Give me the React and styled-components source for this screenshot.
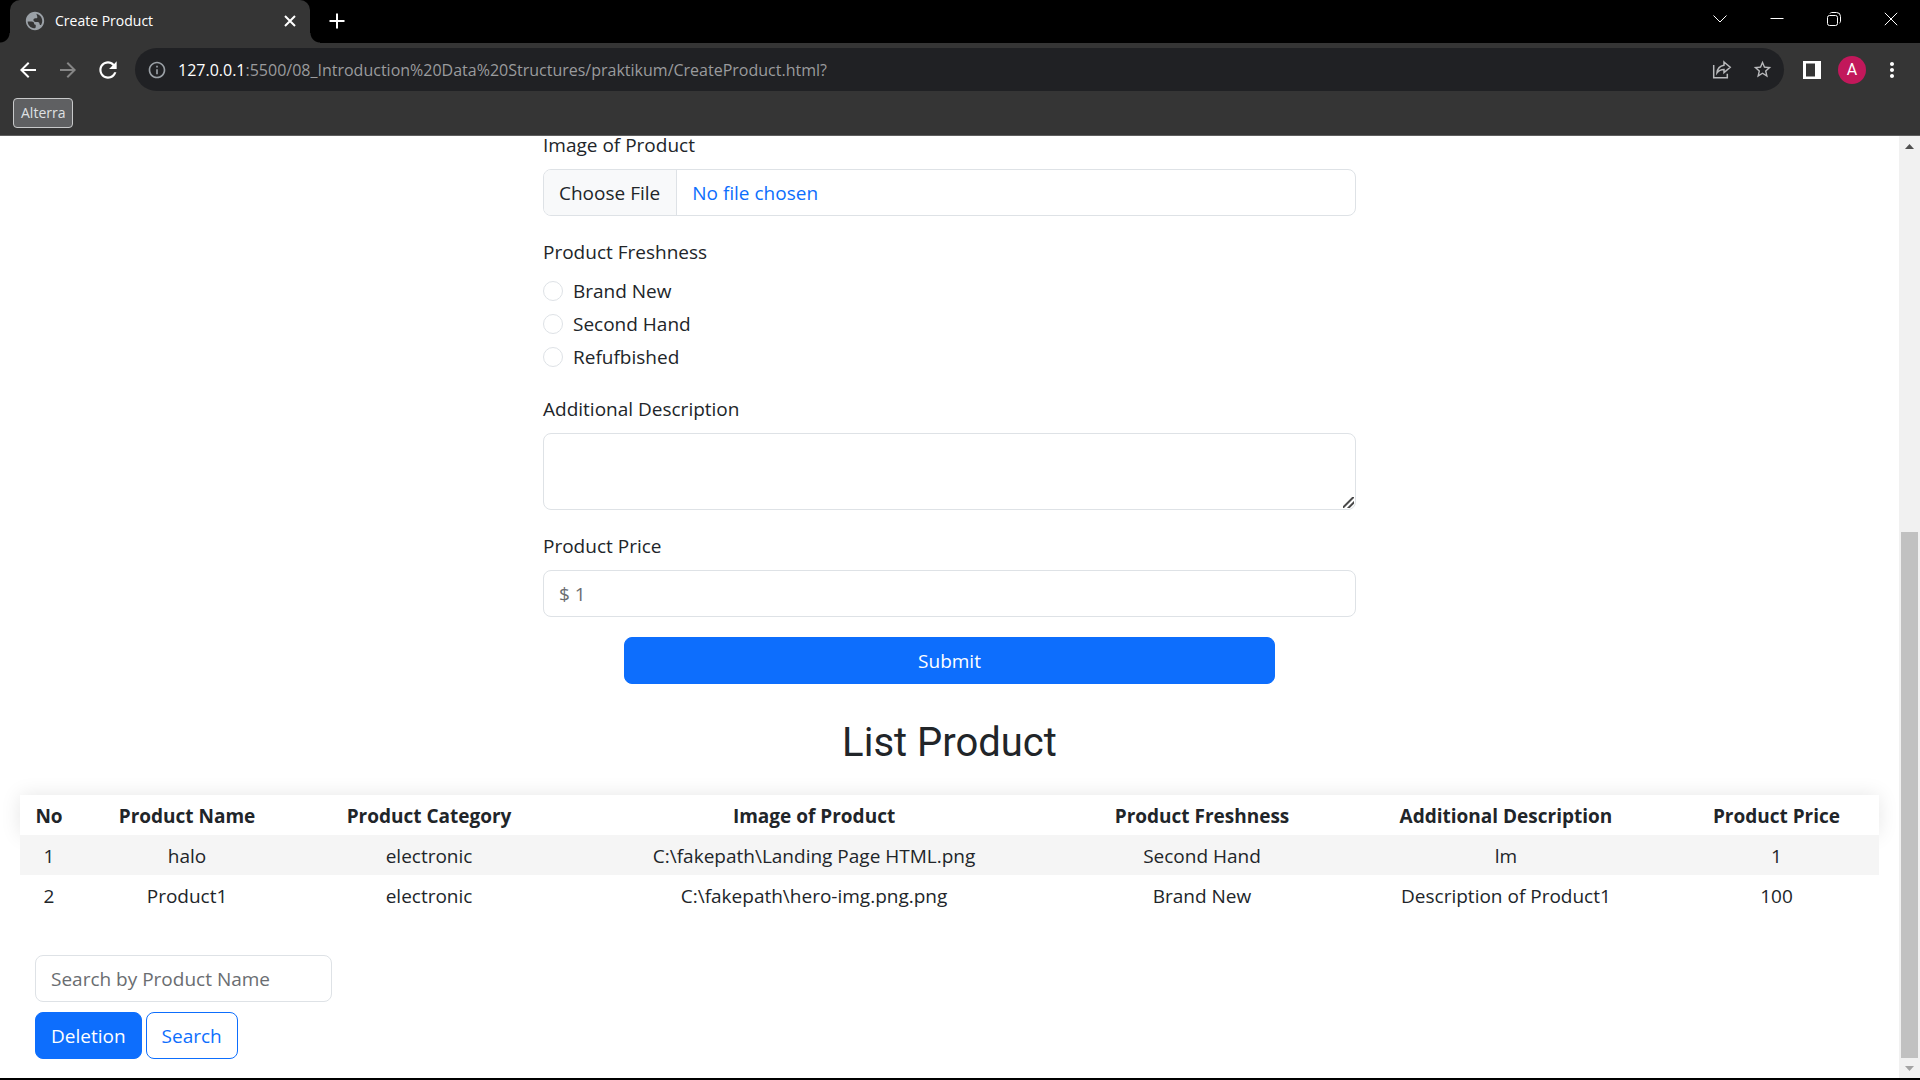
import React from "react";
import styled, { createGlobalStyle, css } from "styled-components";

const sans = '"Open Sans", "Noto Sans", sans-serif';

const GlobalStyle = createGlobalStyle`
  *, *::before, *::after { box-sizing: border-box; }
  body {
    margin: 0;
    background: #000;
    color: #212529;
    font-family: ${sans};
    font-size: 19px;
    line-height: 30px;
  }
  button, input, textarea { font: inherit; margin: 0; }
`;

/* ---------- browser frame ---------- */

const Window = styled.div`
  display: flex;
  flex-direction: column;
  height: 100vh;
  padding-bottom: 2px;
  background: #000;
`;

const TabStrip = styled.header`
  display: flex;
  align-items: flex-start;
  height: 43px;
  padding: 0 1px 0 10px;
  background: #000;
  color: #fff;
  flex: none;
`;

const Tab = styled.div`
  position: relative;
  display: flex;
  align-items: center;
  gap: 9px;
  width: 300px;
  height: 100%;
  padding: 0 10px 2px 14px;
  border-radius: 10px 10px 0 0;
  background: #353535;
  font-size: 14px;
  line-height: 20px;

  &::before, &::after {
    content: "";
    position: absolute;
    bottom: 0;
    width: 10px;
    height: 10px;
  }
  &::before {
    left: -10px;
    background: radial-gradient(circle at 0 0, #000 9px, #353535 10px);
  }
  &::after {
    right: -10px;
    background: radial-gradient(circle at 100% 0, #000 9px, #353535 10px);
  }
`;

const TabTitle = styled.span`
  flex: 1;
`;

const FrameButton = styled.button`
  display: inline-flex;
  align-items: center;
  justify-content: center;
  flex: none;
  width: ${(p) => p.$width || 40}px;
  height: ${(p) => p.$height || 40}px;
  padding: 0;
  border: 0;
  background: transparent;
  color: ${(p) => p.$color || "#fff"};
`;

const NewTab = styled(FrameButton)`
  margin-left: 7px;
`;

const WindowControls = styled.div`
  display: flex;
  margin-left: auto;
`;

const Toolbar = styled.div`
  display: flex;
  align-items: center;
  flex: none;
  padding: 5px 8px 0;
  background: #353535;
`;

const AddressBar = styled.div`
  display: flex;
  align-items: center;
  flex: 1;
  height: 43px;
  margin: 0 8px 0 7px;
  padding: 0 2px 0 12px;
  border-radius: 22px;
  background: #202124;
`;

const Url = styled.span`
  flex: 1;
  padding-left: 11px;
  color: #9a9b9d;
  font-size: 16px;
  line-height: 24px;
`;

const UrlHost = styled.span`
  color: #fff;
`;

const Avatar = styled.span`
  display: flex;
  align-items: center;
  justify-content: center;
  width: 28px;
  height: 28px;
  border-radius: 50%;
  background: #c2185b;
  color: #fff;
  font-family: Roboto, sans-serif;
  font-size: 16px;
`;

const Bookmarks = styled.nav`
  display: flex;
  flex: none;
  padding: 7px 13px;
  border-bottom: 1px solid #5e5e5e;
  background: #353535;
`;

const Bookmark = styled.a`
  padding: 4px 7px;
  border: 1px solid #c8c9ca;
  border-radius: 4px;
  background: #5f6062;
  color: #dfe0e2;
  font-size: 14px;
  line-height: 20px;
  text-decoration: none;
`;

const Viewport = styled.div`
  display: flex;
  flex: 1;
  min-height: 0;
  background: #fff;
`;

const Scrollbar = styled.div`
  display: flex;
  flex-direction: column;
  align-items: center;
  width: 21px;
  flex: none;
  background: #f1f1f1;
`;

const ScrollSpace = styled.div`
  flex: 375;
`;

const ScrollThumb = styled.div`
  flex: 526;
  width: 17px;
  background: #c1c1c1;
`;

/* ---------- page ---------- */

const Page = styled.main`
  display: flex;
  flex-direction: column;
  justify-content: flex-end;
  flex: 1;
  min-width: 0;
  overflow: hidden;
  padding: 0 20px 19px;
`;

const ProductForm = styled.form`
  display: flex;
  flex-direction: column;
  gap: 20px;
  flex: none;
  width: 813px;
  max-width: 100%;
  margin: 0 auto;
`;

const Field = styled.div`
  display: flex;
  flex-direction: column;
  gap: 10px;
`;

const caption = css`
  padding: 6px 0 4px;
  line-height: 20px;
`;

const Label = styled.label`
  ${caption}
`;

const control = css`
  display: block;
  width: 100%;
  padding: 8px 15px;
  border: 1px solid #dee2e6;
  border-radius: 8px;
  background: #fff;
  color: #212529;
  line-height: 30px;

  &::placeholder {
    color: #6a6d71;
    opacity: 1;
  }
`;

const TextInput = styled.input`
  ${control}
  height: 47px;
`;

const FileInput = styled.input`
  ${control}
  height: 47px;
  overflow: hidden;
  color: #0d6efd;

  &::file-selector-button {
    margin: -8px 15px -8px -15px;
    padding: 8px 16px 8px 15px;
    border: 0 solid #dee2e6;
    border-right-width: 1px;
    background: #f8f9fa;
    color: #212529;
    font: inherit;
    line-height: 30px;
  }
`;

const TextArea = styled.textarea`
  ${control}
  height: 77px;
  resize: vertical;

  &::-webkit-resizer {
    background: linear-gradient(
        135deg,
        transparent 6px,
        #4a4a4a 7px,
        #4a4a4a 8px,
        transparent 9px,
        transparent 10px,
        #4a4a4a 11px,
        #4a4a4a 12px,
        transparent 13px
      )
      3px 3px / 11px 11px no-repeat;
  }
`;

const Choices = styled.fieldset`
  margin: 0;
  padding: 0;
  border: 0;
`;

const Legend = styled.legend`
  ${caption}
  margin-bottom: 10px;
`;

const ChoiceList = styled.div`
  display: flex;
  flex-direction: column;
  gap: 3px;
  padding-bottom: 1px;
`;

const Choice = styled.label`
  display: flex;
  align-items: center;
  gap: 10px;
`;

const Radio = styled.input`
  appearance: none;
  width: 20px;
  height: 20px;
  border: 1px solid #dee2e6;
  border-radius: 50%;
  background: #fff;
  &:checked { border: 6px solid #0d6efd; }
`;

const Button = styled.button`
  padding: 8px 15px 7px;
  border: 1px solid #0d6efd;
  border-radius: 8px;
  background: ${(p) => (p.$outline ? "#fff" : "#0d6efd")};
  color: ${(p) => (p.$outline ? "#0d6efd" : "#fff")};
  line-height: 30px;
`;

const SubmitButton = styled(Button)`
  width: 80%;
  align-self: center;
`;

const Heading = styled.h2`
  flex: none;
  margin: 33px 0 27px;
  font-family: Roboto, sans-serif;
  font-size: 40px;
  font-weight: 400;
  line-height: 51px;
  text-align: center;
`;

const Table = styled.table`
  flex: none;
  width: 100%;
  table-layout: fixed;
  border-collapse: collapse;
  text-align: center;

  th, td {
    padding: 6px 5px 4px;
    overflow-wrap: anywhere;
  }
  thead {
    box-shadow: 0 0 20px rgba(0, 0, 0, 0.1);
  }
  thead th {
    background: #fff;
    font-weight: 700;
  }
  tbody tr { background: #fff; }
  tbody tr:nth-child(odd) { background: #f5f5f5; }
`;

const Col = styled.col`
  width: ${(p) => p.$width};
`;

const SearchForm = styled.form`
  display: flex;
  flex-direction: column;
  align-items: flex-start;
  gap: 10px;
  flex: none;
  margin-top: 40px;
  padding: 0 15px;
`;

const SearchInput = styled(TextInput)`
  width: 297px;
`;

const ButtonRow = styled.div`
  display: flex;
  gap: 4px;
`;

/* ---------- icons ---------- */

const Glyph = ({ size = 24, d }) => (
  <svg width={size} height={size} viewBox="0 0 24 24" fill="currentColor" aria-hidden="true">
    <path d={d} />
  </svg>
);

const Lines = ({ width = 14, height = 14, d, stroke = 1 }) => (
  <svg width={width} height={height} viewBox={`0 0 ${width} ${height}`} fill="none" stroke="currentColor" strokeWidth={stroke} aria-hidden="true">
    <path d={d} />
  </svg>
);

const GLOBE = "M12 2C6.48 2 2 6.48 2 12s4.48 10 10 10 10-4.48 10-10S17.52 2 12 2zM4 12.500h4.500c1.500 0 2.500 1 2.500 2.200 0 1 .8 1.500 1.800 1.500V18.500c0 .8-.8 1.400-1.800 1.400-4-.5-7-3.500-7-7.400zM13.500 4.200c3.700.8 6.400 4 6.400 7.800 0 1.600-.5 3.100-1.300 4.400-.8.300-1.600-.2-1.600-1.200 0-1.400-.9-2.200-2.200-2.200h-2.300c-1.300 0-2.200-.9-2.200-2s.9-2 2-2h.9c.9 0 1.400-.6 1.400-1.400z";
const BACK = "M20 11H7.83l5.59-5.59L12 4l-8 8 8 8 1.41-1.41L7.83 13H20v-2z";
const FORWARD = "M12 4l-1.41 1.41L16.17 11H4v2h12.17l-5.58 5.59L12 20l8-8z";
const RELOAD = "M17.65 6.35C16.2 4.9 14.21 4 12 4c-4.42 0-7.99 3.58-7.99 8s3.57 8 7.99 8c3.73 0 6.84-2.55 7.73-6h-2.08c-.82 2.33-3.04 4-5.65 4-3.31 0-6-2.69-6-6s2.69-6 6-6c1.66 0 3.14.69 4.22 1.78L13 11h7V4l-2.35 2.35z";
const INFO = "M11 7h2v2h-2zm0 4h2v6h-2zm1-9C6.48 2 2 6.48 2 12s4.48 10 10 10 10-4.48 10-10S17.52 2 12 2zm0 18c-4.41 0-8-3.59-8-8s3.59-8 8-8 8 3.59 8 8-3.59 8-8 8z";
const STAR = "M22 9.24l-7.19-.62L12 2 9.19 8.63 2 9.24l5.46 4.73L5.82 21 12 17.27 18.18 21l-1.63-7.03L22 9.24zM12 15.4l-3.76 2.27 1-4.28-3.32-2.88 4.38-.38L12 6.1l1.71 4.04 4.38.38-3.32 2.88 1 4.28L12 15.4z";
const DOTS = "M12 8c1.1 0 2-.9 2-2s-.9-2-2-2-2 .9-2 2 .9 2 2 2zm0 2c-1.1 0-2 .9-2 2s.9 2 2 2 2-.9 2-2-.9-2-2-2zm0 6c-1.1 0-2 .9-2 2s.9 2 2 2 2-.9 2-2-.9-2-2-2z";

/* ---------- data ---------- */

const columns = [
  ["No", "3.12%"],
  ["Product Name", "11.73%"],
  ["Product Category", "14.31%"],
  ["Image of Product", "27.11%"],
  ["Product Freshness", "14.63%"],
  ["Additional Description", "18.07%"],
  ["Product Price", "11.03%"],
];

const products = [
  ["1", "halo", "electronic", "C:\\fakepath\\Landing Page HTML.png", "Second Hand", "lm", "1"],
  ["2", "Product1", "electronic", "C:\\fakepath\\hero-img.png.png", "Brand New", "Description of Product1", "100"],
];

const freshness = ["Brand New", "Second Hand", "Refufbished"];

const hold = (event) => event.preventDefault();

export default function App() {
  return (
    <Window>
      <GlobalStyle />
      <TabStrip>
        <Tab>
          <svg width="22" height="22" viewBox="0 0 24 24" fill="#9aa0a6" fillRule="evenodd" aria-hidden="true">
            <path d={GLOBE} />
          </svg>
          <TabTitle>Create Product</TabTitle>
          <FrameButton $width={20} $height={20} aria-label="Close tab">
            <Lines width={12} height={12} stroke={2} d="M1 1l10 10M11 1L1 11" />
          </FrameButton>
        </Tab>
        <NewTab $height={42} aria-label="New tab">
          <Lines width={16} height={16} stroke={2} d="M8 0.500v15M0.500 8h15" />
        </NewTab>
        <WindowControls>
          <FrameButton $width={57} $height={38} aria-label="Search tabs">
            <Lines d="M0.500 3.500l6.500 6.500 6.500-6.500" />
          </FrameButton>
          <FrameButton $width={57} $height={38} aria-label="Minimize">
            <Lines d="M0.500 6.500h13" />
          </FrameButton>
          <FrameButton $width={57} $height={38} aria-label="Restore">
            <Lines d="M2.500 3.500h6a2 2 0 0 1 2 2v6a2 2 0 0 1-2 2h-6a2 2 0 0 1-2-2v-6a2 2 0 0 1 2-2zM3 1.500q.5-1 1.500-1h5a4 4 0 0 1 4 4v5q0 1-1 1.500" />
          </FrameButton>
          <FrameButton $width={57} $height={38} aria-label="Close">
            <Lines d="M0.800 0.800l12.400 12.400M13.200 0.800L0.800 13.200" />
          </FrameButton>
        </WindowControls>
      </TabStrip>

      <Toolbar>
        <FrameButton aria-label="Back"><Glyph d={BACK} /></FrameButton>
        <FrameButton aria-label="Forward" $color="#868686"><Glyph d={FORWARD} /></FrameButton>
        <FrameButton aria-label="Reload"><Glyph size={26} d={RELOAD} /></FrameButton>
        <AddressBar>
          <svg width="20" height="20" viewBox="0 0 24 24" fill="#9aa0a6" aria-hidden="true">
            <path d={INFO} />
          </svg>
          <Url>
            <UrlHost>127.0.0.1</UrlHost>:5500/08_Introduction%20Data%20Structures/praktikum/CreateProduct.html?
          </Url>
          <FrameButton aria-label="Share" $color="#b9babc">
            <Lines
              width={20}
              height={20}
              stroke={1.5}
              d="M1.700 5v12.800h13.600v-4M12 2l6.200 5.300-6.200 5.300v-3.200c-3 0-5.200.8-7 3.400.4-4 2.800-7 7-7.600z"
            />
          </FrameButton>
          <FrameButton aria-label="Bookmark this page" $color="#b9babc"><Glyph size={21} d={STAR} /></FrameButton>
        </AddressBar>
        <FrameButton aria-label="Side panel">
          <svg width="18" height="18" viewBox="0 0 18 18" fill="currentColor" fillRule="evenodd" aria-hidden="true">
            <path d="M0 0h18v18H0zM3 2.500v13h9v-13z" />
          </svg>
        </FrameButton>
        <FrameButton aria-label="Profile"><Avatar>A</Avatar></FrameButton>
        <FrameButton aria-label="Menu"><Glyph d={DOTS} /></FrameButton>
      </Toolbar>

      <Bookmarks>
        <Bookmark href="#alterra">Alterra</Bookmark>
      </Bookmarks>

      <Viewport>
        <Page>
          <ProductForm onSubmit={hold}>
            <Field>
              <Label htmlFor="image">Image of Product</Label>
              <FileInput id="image" type="file" />
            </Field>
            <Choices>
              <Legend>Product Freshness</Legend>
              <ChoiceList>
                {freshness.map((name) => (
                  <Choice key={name}>
                    <Radio type="radio" name="freshness" value={name} />
                    {name}
                  </Choice>
                ))}
              </ChoiceList>
            </Choices>
            <Field>
              <Label htmlFor="description">Additional Description</Label>
              <TextArea id="description" />
            </Field>
            <Field>
              <Label htmlFor="price">Product Price</Label>
              <TextInput id="price" placeholder="$ 1" />
            </Field>
            <SubmitButton type="submit">Submit</SubmitButton>
          </ProductForm>

          <Heading>List Product</Heading>

          <Table>
            <colgroup>
              {columns.map(([name, width]) => <Col key={name} $width={width} />)}
            </colgroup>
            <thead>
              <tr>
                {columns.map(([name]) => <th key={name} scope="col">{name}</th>)}
              </tr>
            </thead>
            <tbody>
              {products.map((row) => (
                <tr key={row[0]}>
                  {row.map((cell, i) => <td key={columns[i][0]}>{cell}</td>)}
                </tr>
              ))}
            </tbody>
          </Table>

          <SearchForm onSubmit={hold}>
            <SearchInput placeholder="Search by Product Name" aria-label="Search by Product Name" />
            <ButtonRow>
              <Button type="button">Deletion</Button>
              <Button type="submit" $outline>Search</Button>
            </ButtonRow>
          </SearchForm>
        </Page>
        <Scrollbar aria-hidden="true">
          <FrameButton $width={21} $height={21} $color="#505050" tabIndex={-1}>
            <svg width="9" height="5" viewBox="0 0 9 5" fill="currentColor"><path d="M0 5L4.500 0 9 5z" /></svg>
          </FrameButton>
          <ScrollSpace />
          <ScrollThumb />
          <FrameButton $width={21} $height={20} $color="#a3a3a3" tabIndex={-1}>
            <svg width="9" height="5" viewBox="0 0 9 5" fill="currentColor"><path d="M0 0h9L4.500 5z" /></svg>
          </FrameButton>
        </Scrollbar>
      </Viewport>
    </Window>
  );
}
